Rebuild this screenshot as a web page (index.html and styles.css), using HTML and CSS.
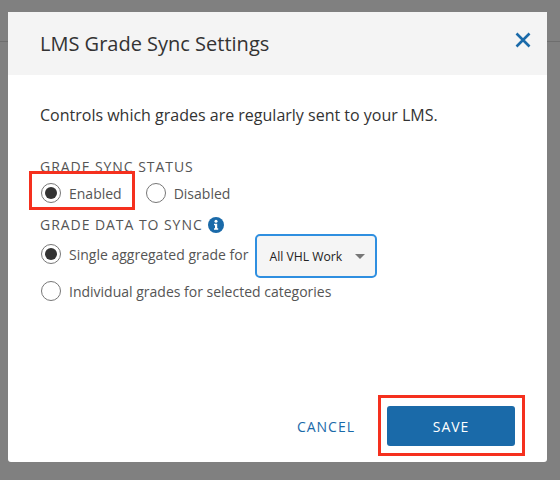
FILE: index.html
```html
<!DOCTYPE html>
<html lang="en">
<head>
    <meta charset="UTF-8">
    <title>LMS Grade Sync Settings</title>
    <link rel="stylesheet" href="styles.css">
</head>
<body>
    <div class="page-bar"></div>

    <div class="modal">
        <div class="modal-header">
            <h2>LMS Grade Sync Settings</h2>
            <button class="close-btn" aria-label="Close">
                <svg width="16" height="16" viewBox="0 0 16 16">
                    <path d="M1.5 1.5L14.5 14.5M14.5 1.5L1.5 14.5" fill="none" stroke="#1a6aa9" stroke-width="2.6"/>
                </svg>
            </button>
        </div>

        <div class="modal-body">
            <p class="intro">Controls which grades are regularly sent to your LMS.</p>

            <div class="field-label">GRADE SYNC STATUS</div>
            <div class="radio-row status-row">
                <label class="radio"><span class="dot checked"></span>Enabled</label>
                <label class="radio"><span class="dot"></span>Disabled</label>
            </div>

            <div class="field-label data-label">
                GRADE DATA TO SYNC
                <svg class="info" width="16" height="16" viewBox="0 0 16 16">
                    <circle cx="8" cy="8" r="8" fill="#1a6aa9"/>
                    <circle cx="8" cy="4.3" r="1.5" fill="#fff"/>
                    <path d="M6 6.8H9.2V11.3H10.2V12.8H6V11.3H7V8.3H6Z" fill="#fff"/>
                </svg>
            </div>
            <div class="radio-row select-row">
                <label class="radio"><span class="dot checked"></span>Single aggregated grade for</label>
                <div class="select">
                    <span>All VHL Work</span>
                    <span class="caret"></span>
                </div>
            </div>
            <div class="radio-row">
                <label class="radio"><span class="dot"></span>Individual grades for selected categories</label>
            </div>
        </div>

        <div class="modal-footer">
            <button class="cancel-btn">CANCEL</button>
            <button class="save-btn">SAVE</button>
        </div>

        <div class="callout callout-enabled"></div>
        <div class="callout callout-save"></div>
    </div>
</body>
</html>
```

FILE: styles.css
```css
:root {
    --blue: #1a6aa9;
    --text-color: #333333;
    --text-light: #555555;
    --callout: #f5301e;
}

* {
    margin: 0;
    padding: 0;
    box-sizing: border-box;
}

body {
    width: 560px;
    height: 480px;
    overflow: hidden;
    background: #808080;
    font-family: "Open Sans", sans-serif;
    position: relative;
}

.page-bar {
    height: 42px;
    border-bottom: 1px solid #6e6e6e;
}

.modal {
    position: absolute;
    left: 8px;
    top: 12px;
    width: 539px;
    height: 450px;
    background: #ffffff;
    border-radius: 0 0 3px 3px;
    display: flex;
    flex-direction: column;
}

.modal-header {
    height: 63px;
    background: #f4f4f4;
    padding: 0 16px 0 32px;
    display: flex;
    align-items: center;
    justify-content: space-between;
}

h2 {
    font-size: 20px;
    font-weight: 400;
    color: var(--text-color);
}

.close-btn {
    background: none;
    border: none;
    display: flex;
    margin-top: -8px;
}

.modal-body {
    flex: 1;
    padding: 28px 32px 0;
}

.intro {
    font-size: 16px;
    line-height: 24px;
    color: var(--text-color);
    margin-bottom: 30px;
}

.field-label {
    font-size: 14px;
    line-height: 20px;
    letter-spacing: 0.95px;
    color: var(--text-light);
}

.data-label {
    display: flex;
    align-items: center;
    gap: 5px;
}

.radio-row {
    display: flex;
    align-items: center;
    gap: 24px;
    margin-bottom: 12px;
    padding-left: 1px;
}

.status-row {
    height: 24px;
    margin: 4px 0 10px;
}

.select-row {
    height: 44px;
    gap: 7px;
    margin: -1px 0 3px;
}

.select-row .radio {
    margin-bottom: 4px;
}

.radio {
    display: flex;
    align-items: center;
    gap: 8px;
    font-size: 14px;
    color: var(--text-light);
}

.dot {
    width: 20px;
    height: 20px;
    border: 1px solid #777777;
    border-radius: 50%;
    background: #ffffff;
    position: relative;
}

.dot.checked::after {
    content: "";
    position: absolute;
    left: 3px;
    top: 3px;
    width: 12px;
    height: 12px;
    border-radius: 50%;
    background: #333333;
}

.select {
    width: 122px;
    height: 44px;
    background: #f5f5f5;
    border: 2px solid #2f8fe0;
    border-radius: 5px;
    padding: 0 10px 0 12px;
    display: flex;
    align-items: center;
    justify-content: space-between;
    font-size: 12.2px;
    color: #222222;
}

.caret {
    border-left: 5px solid transparent;
    border-right: 5px solid transparent;
    border-top: 5px solid #777777;
}

.modal-footer {
    display: flex;
    align-items: center;
    justify-content: flex-end;
    gap: 32px;
    padding: 0 32px 16px;
}

.cancel-btn {
    background: none;
    border: none;
    font-family: inherit;
    font-size: 14px;
    letter-spacing: 1px;
    color: var(--blue);
}

.save-btn {
    width: 128px;
    height: 40px;
    background: var(--blue);
    border: none;
    border-radius: 3px;
    font-family: inherit;
    font-size: 14px;
    font-weight: 500;
    letter-spacing: 0.9px;
    color: #ffffff;
}

/* red annotation boxes on top of the screenshot */
.callout {
    position: absolute;
    border: 3px solid var(--callout);
}

.callout-enabled {
    left: 21px;
    top: 159px;
    width: 106px;
    height: 39px;
}

.callout-save {
    left: 370px;
    top: 383px;
    width: 147px;
    height: 61px;
}
```
